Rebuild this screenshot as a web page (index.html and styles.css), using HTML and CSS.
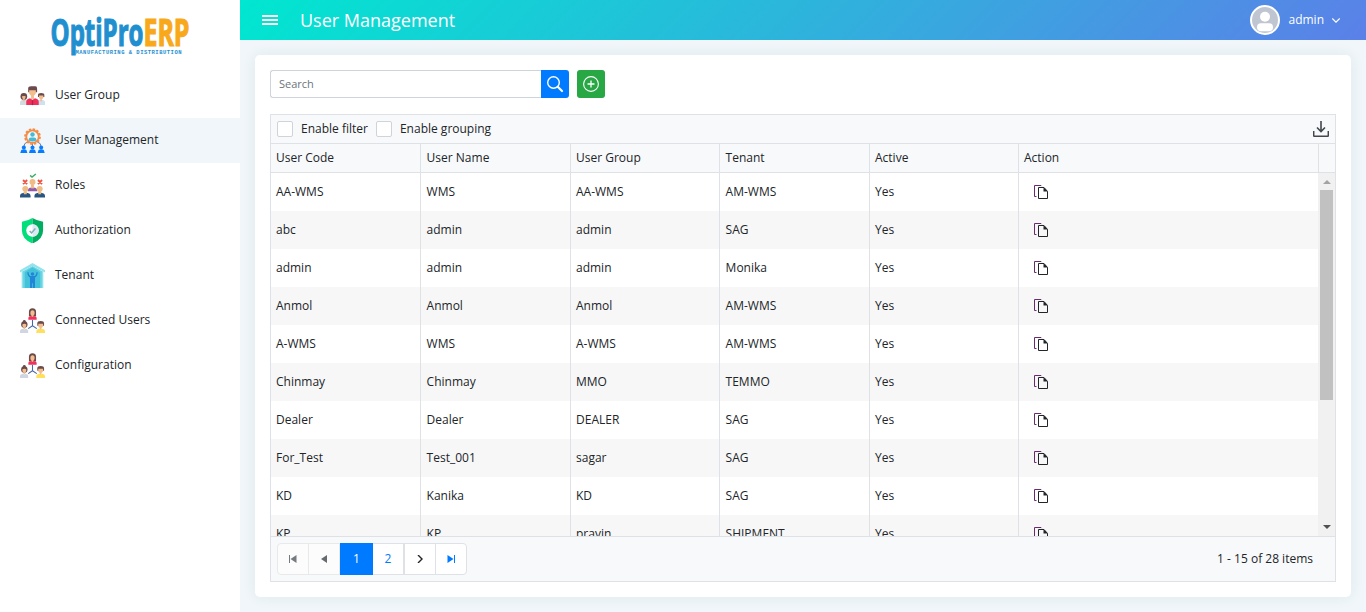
FILE: index.html
```html
<!DOCTYPE html>
<html lang="en">
<head>
<meta charset="utf-8">
<title>User Management</title>
<link rel="stylesheet" href="styles.css">
</head>
<body>
<svg class="defs" width="0" height="0" aria-hidden="true">
  <symbol id="copy" viewBox="0 0 16 16"><path d="M3.500 12.500h-2V1.500h6.500l.7.7" fill="none" stroke="#6b2a70"/><path d="M5.500 3.500h5.500l3.500 4v7H5.500z" fill="none" stroke="currentColor"/><path d="M10.500 3v4.500H15z" fill="currentColor"/></symbol>
  <symbol id="network" viewBox="0 0 26 26">
    <path d="M13 12.500v6M13 18.500l-4.500 3M13 18.500l4.500 3" stroke="#4468a8" stroke-width="1.100" fill="none"/>
    <path d="M9.300 8.500V4a3.700 3.700 0 0 1 7.400 0v4.500z" fill="#6b4a4b"/><ellipse cx="13" cy="5.200" rx="2.200" ry="2.800" fill="#f3bd8d"/><path d="M12 7h2v2.500h-2z" fill="#f3bd8d"/><path d="M8.700 12.200V10.200q0-1.700 3-1.900l1.300 1 1.300-1q3 .2 3 1.900v2z" fill="#f0325c"/>
    <circle cx="4.500" cy="14" r="1.500" fill="#6b4a4b"/><circle cx="4.500" cy="17.200" r="3.300" fill="#6b4a4b"/><path d="M2.500 17q2-1 4 0v2q-2 2.700-4 0zM3.700 19h1.600v3H3.700z" fill="#f3bd8d"/><path d="M0 26v-1.800Q0 22 3.500 21.700l1 1 1-1Q8.500 22 8.500 24.200V26z" fill="#cfd6e2"/>
    <path d="M18 18.500V16q0-2.500 3.500-2.500T25 16v2.500z" fill="#6b4a4b"/><path d="M19 16.300h5V19q-2.500 4-5 0zM20.700 20h1.600v3h-1.600z" fill="#f3bd8d"/><path d="M17 26v-1.800q0-2.200 3.500-2.500l1 1 1-1q3.500.3 3.500 2.500V26z" fill="#ffe05c"/>
  </symbol>
</svg>
<div class="app">
  <aside class="sidebar">
    <svg class="logo" width="240" height="73" viewBox="0 0 240 73">
      <text class="logo-word" fill="#1f8fd0" stroke="#1f8fd0" x="50.500" y="45.700" textLength="93" lengthAdjust="spacingAndGlyphs">OptiPro</text>
      <text class="logo-word" fill="#f8a91b" stroke="#f8a91b" x="143.500" y="45.700" textLength="46" lengthAdjust="spacingAndGlyphs">ERP</text>
      <text class="logo-tag" x="75.500" y="54" textLength="106">MANUFACTURING &amp; DISTRIBUTION</text>
    </svg>
    <nav class="menu">
      <a class="menu-item"><svg class="menu-icon" viewBox="0 0 26 26">
        <path d="M0 23v-3q0-2 4-2.500h2Q9 18 9 20v3z" fill="#d5d9e2"/><circle cx="4" cy="14" r="3.500" fill="#6a4a4c"/><path d="M2.300 13.500h3.400v2.200q-1.700 2.500-3.400 0zM3.200 16h1.600v3H3.200z" fill="#f0b78a"/>
        <path d="M17 23v-3q0-2 4-2.500h1q4 .5 4 2.500v3z" fill="#cfe0f1"/><path d="M18.700 14.500v-2q0-2 3.300-2t3.300 2v2z" fill="#6a4a4c"/><path d="M19.700 13h4.600v2.500q-2.300 3-4.600 0zM21 16h2v3h-2z" fill="#f3bd8d"/>
        <path d="M8.500 9.500V6q0-2.500 3-2.500H16q1.800 0 1.800 2.500v3.500z" fill="#6a4a4c"/><path d="M9.500 7.500h7V11q-3.500 5.500-7 0zM11.500 12h3v5h-3z" fill="#f3bd8d"/>
        <path d="M6.500 23v-3.500q0-3 4-3.700l2.500 2 2.500-2q4 .7 4 3.700V23z" fill="#ee2f5b"/><path d="M12.300 18h1.400v5h-1.400z" fill="#b71f44"/>
      </svg><span>User Group</span></a>
      <a class="menu-item active"><svg class="menu-icon" viewBox="0 0 26 26">
        <path d="M13 16v5M8 14.500q-4 1-4 5M18 14.500q4 1 4 5" stroke="#657b99" fill="none"/>
        <circle cx="13" cy="9" r="7.800" fill="none" stroke="#f58b45" stroke-width="1.800" stroke-dasharray="2.500 1.580"/><circle cx="13" cy="9" r="6.500" fill="#eefafc" stroke="#f58b45" stroke-width="1.900"/>
        <circle cx="13" cy="6.800" r="2.300" fill="#4db8d2"/><path d="M9 13v-1q0-2 2.500-2.200h3Q17 10 17 12v1q-4 2.300-8 0z" fill="#4db8d2"/>
        <g fill="#087cff"><circle cx="4" cy="20.300" r="2.100"/><path d="M.3 26l1-3q2.700-2 5.400 0l1 3z"/><circle cx="13" cy="20.300" r="2.100"/><path d="M9.300 26l1-3q2.700-2 5.400 0l1 3z"/><circle cx="22" cy="20.300" r="2.100"/><path d="M18.300 26l1-3q2.700-2 5.400 0l1 3z"/></g>
      </svg><span>User Management</span></a>
      <a class="menu-item"><svg class="menu-icon" viewBox="0 0 26 26">
        <path d="M10.500 2.500l2 1.700 4-3.200" stroke="#3caf68" stroke-width="1.500" fill="none"/><path d="M3.200 7.300l4.200 4.200m0-4.200l-4.200 4.200M18.700 7.300l4.200 4.200m0-4.200l-4.200 4.200" stroke="#ef533f" stroke-width="2"/>
        <path d="M8 19q0-4 4-4h2q4 0 4 4z" fill="#9159a8"/><circle cx="13" cy="9.300" r="3.100" fill="#f0bc85"/><path d="M11.500 12h3v4h-3z" fill="#f0bc85"/>
        <path d="M0 25.500v-1.500q0-3 4-3.500h3q4 .5 4 3.500v1.500zM15 25.500v-1.500q0-3 4-3.500h3q4 .5 4 3.500v1.500z" fill="#285680"/><circle cx="5.500" cy="16.500" r="3.100" fill="#f0bc85"/><circle cx="20.500" cy="16.500" r="3.100" fill="#f0bc85"/><path d="M4 19h3v3H4zM19 19h3v3h-3z" fill="#f0bc85"/>
      </svg><span>Roles</span></a>
      <a class="menu-item"><svg class="menu-icon" viewBox="0 0 26 26">
        <path d="M13 0Q8 3 2 4v9q0 9 11 13.500z" fill="#00df7c"/><path d="M13 0q5 3 11 4v9q0 9-11 13.500z" fill="#00ad61"/><circle cx="13" cy="13" r="6.500" fill="#fff"/><path d="M13 6.500a6.500 6.500 0 0 1 0 13z" fill="#dde9f2"/><path d="M10 13.500l2 2 4-4.500" stroke="#7fb0be" stroke-width="1.500" fill="none"/>
      </svg><span>Authorization</span></a>
      <a class="menu-item"><svg class="menu-icon" viewBox="0 0 26 26">
        <path d="M2 9l11-6 11 6v17H2z" fill="#6bd3e2"/><path d="M13 4.500l8 5V26H5V9.500z" fill="#43c3da"/><path d="M0 10V7.500L13 0l13 7.500V10L13 3z" fill="#91e3ed"/><path d="M2.500 9v17M23.500 9v17" stroke="#8ce3ec" stroke-width="1.300"/>
        <circle cx="13" cy="11.500" r="1.800" fill="#2384d8"/><path d="M8.300 9.500q0 4 3 5M17.700 9.500q0 4-3 5" stroke="#2384d8" stroke-width="1.400" fill="none"/><path d="M10.300 13.500h5.400L15.500 26h-2.100v-5h-.8v5h-2.100z" fill="#2384d8"/>
      </svg><span>Tenant</span></a>
      <a class="menu-item"><svg class="menu-icon"><use href="#network"/></svg><span>Connected Users</span></a>
      <a class="menu-item"><svg class="menu-icon"><use href="#network"/></svg><span>Configuration</span></a>
    </nav>
  </aside>
  <div class="main">
    <header class="topbar">
      <svg class="burger" width="16" height="10" viewBox="0 0 16 10"><path d="M0 1h16M0 5h16M0 9h16" stroke="#fff" stroke-width="2"/></svg>
      <h1 class="title">User Management</h1>
      <div class="account">
        <svg width="30" height="30" viewBox="0 0 30 30"><circle cx="15" cy="15" r="14" fill="#c0c6d1" stroke="#fff" stroke-width="2"/><circle cx="15" cy="11.700" r="5" fill="#fff"/><rect x="7" y="18.200" width="16" height="8" rx="4" fill="#fff"/></svg>
        <span class="account-name">admin</span>
        <svg width="8" height="5" viewBox="0 0 8 5"><path d="M.3.5L4 4.200 7.700.5" stroke="#fff" stroke-width="1.200" fill="none"/></svg>
      </div>
    </header>
    <section class="card">
      <div class="search-row">
        <input class="search" type="text" placeholder="Search">
        <button class="btn find"><svg width="18" height="18" viewBox="0 0 18 18" fill="none" stroke="#fff"><circle cx="7.500" cy="7.500" r="5.800" stroke-width="1.400"/><path d="M12 12l4 4" stroke-width="2.200" stroke-linecap="round"/></svg></button>
        <button class="btn add"><svg width="16" height="16" viewBox="0 0 16 16" fill="none" stroke="#fff"><circle cx="8" cy="8" r="7.400" stroke-width="1.100"/><path d="M8 4.500v7M4.500 8h7" stroke-width="1.300"/></svg></button>
      </div>
      <div class="grid">
        <div class="toolbar">
          <label class="check"><i class="box"></i>Enable filter</label>
          <label class="check"><i class="box"></i>Enable grouping</label>
          <svg class="export" width="16" height="16" viewBox="0 0 16 16" fill="none" stroke="#42474c"><path d="M8 0v10M4 6.500l4 4 4-4" stroke-width="1.600"/><path d="M.7 10v4.500q0 .8.800.8h13q.8 0 .8-.8V10" stroke-width="1.500"/></svg>
        </div>
        <div class="row head"><span>User Code</span><span>User Name</span><span>User Group</span><span>Tenant</span><span>Active</span><span>Action</span><span class="head-end"></span></div>
        <div class="body">
          <div class="rows">
            <div class="row"><span>AA-WMS</span><span>WMS</span><span>AA-WMS</span><span>AM-WMS</span><span>Yes</span><span class="action"><svg><use href="#copy"/></svg></span></div>
            <div class="row"><span>abc</span><span>admin</span><span>admin</span><span>SAG</span><span>Yes</span><span class="action"><svg><use href="#copy"/></svg></span></div>
            <div class="row"><span>admin</span><span>admin</span><span>admin</span><span>Monika</span><span>Yes</span><span class="action"><svg><use href="#copy"/></svg></span></div>
            <div class="row"><span>Anmol</span><span>Anmol</span><span>Anmol</span><span>AM-WMS</span><span>Yes</span><span class="action"><svg><use href="#copy"/></svg></span></div>
            <div class="row"><span>A-WMS</span><span>WMS</span><span>A-WMS</span><span>AM-WMS</span><span>Yes</span><span class="action"><svg><use href="#copy"/></svg></span></div>
            <div class="row"><span>Chinmay</span><span>Chinmay</span><span>MMO</span><span>TEMMO</span><span>Yes</span><span class="action"><svg><use href="#copy"/></svg></span></div>
            <div class="row"><span>Dealer</span><span>Dealer</span><span>DEALER</span><span>SAG</span><span>Yes</span><span class="action"><svg><use href="#copy"/></svg></span></div>
            <div class="row"><span>For_Test</span><span>Test_001</span><span>sagar</span><span>SAG</span><span>Yes</span><span class="action"><svg><use href="#copy"/></svg></span></div>
            <div class="row"><span>KD</span><span>Kanika</span><span>KD</span><span>SAG</span><span>Yes</span><span class="action"><svg><use href="#copy"/></svg></span></div>
            <div class="row"><span>KP</span><span>KP</span><span>pravin</span><span>SHIPMENT</span><span>Yes</span><span class="action"><svg><use href="#copy"/></svg></span></div>
          </div>
          <div class="scrollbar">
            <svg width="8" height="4" viewBox="0 0 8 4"><path d="M0 4l4-4 4 4z" fill="#a3a3a3"/></svg>
            <div class="thumb"></div>
            <svg class="down" width="8" height="4" viewBox="0 0 8 4"><path d="M0 0l4 4 4-4z" fill="#505050"/></svg>
          </div>
        </div>
        <div class="pager">
          <div class="pages">
            <span class="page off"><svg width="8" height="8" viewBox="0 0 8 8"><path d="M.5 0v8" stroke="#757a7f"/><path d="M7.500 0v8L1.500 4z" fill="#757a7f"/></svg></span>
            <span class="page off"><svg width="8" height="8" viewBox="0 0 8 8"><path d="M7 0v8L1 4z" fill="#656a6f"/></svg></span>
            <span class="page current">1</span>
            <span class="page">2</span>
            <span class="page next"><svg width="8" height="8" viewBox="0 0 8 8"><path d="M2 0l4 4-4 4" stroke="#212529" stroke-width="1.400" fill="none"/></svg></span>
            <span class="page"><svg width="8" height="8" viewBox="0 0 8 8"><path d="M7.500 0v8" stroke="#007bff"/><path d="M.5 0v8l6-4z" fill="#007bff"/></svg></span>
          </div>
          <span class="info">1 - 15 of 28 items</span>
        </div>
      </div>
    </section>
  </div>
</div>
</body>
</html>
```
FILE: styles.css
```css
* { box-sizing: border-box; }
body { margin: 0; font: 12px/18px "Open Sans", sans-serif; color: #212529; background: #f0f6f9; overflow: hidden; }
svg { display: block; flex: none; }
.defs { position: absolute; }
.app { display: flex; width: 1366px; height: 612px; }
.sidebar { width: 240px; background: #fff; flex: none; }
.logo-word { font: 700 37px "Open Sans", sans-serif; stroke-width: 1.2px; }
.logo-tag { font: 700 5.500px "Liberation Mono", monospace; fill: #1f8fd0; }
.menu-item { display: flex; align-items: center; gap: 10px; height: 45px; padding-left: 20px; }
.menu-item.active { background: #f0f6f9; }
.menu-icon { width: 25px; height: 25px; }
.menu-item span { padding-bottom: 1px; }
.main { flex: 1; min-width: 0; }
.topbar { display: flex; align-items: center; height: 40px; padding: 0 26px 0 22px; color: #fff; background: linear-gradient(135deg, #00e7d0 0%, #5b80e8 100%); }
.title { margin: 0 0 1px 22px; font-size: 18px; line-height: 24px; font-weight: 400; }
.account { display: flex; align-items: center; margin-left: auto; gap: 8px; }
.card { margin: 15px; padding: 15px; height: 542px; background: #fff; border-radius: 5px; box-shadow: 0 0 14px rgba(0, 90, 90, .08); }
.search-row { display: flex; height: 28px; margin-bottom: 16px; }
.search { width: 271px; border: 1px solid #ced4da; border-right: 0; border-radius: 3px 0 0 3px; padding: 0 8px 2px; font: 11px "Open Sans", sans-serif; outline: 0; }
.search::placeholder { color: #6c757d; }
.btn { display: flex; align-items: center; justify-content: center; width: 28px; border: 0; padding: 0; }
.find { background: #007bff; border-radius: 0 3px 3px 0; }
.add { background: #28a745; border-radius: 3px; margin-left: 8px; }
.grid { height: 468px; border: 1px solid #dee2e6; }
.toolbar { display: flex; align-items: center; height: 29px; padding: 0 6px; background: #f8f9fb; border-bottom: 1px solid #dee2e6; }
.check { display: flex; align-items: center; margin-right: 8px; }
.box { width: 16px; height: 16px; margin-right: 8px; background: #fff; border: 1px solid #ced4da; border-radius: 2px; }
.export { margin-left: auto; }
.row { display: grid; grid-template-columns: 149px 150px 149px 150px 149px 300px; height: 38px; }
.row > span { display: flex; align-items: center; padding-left: 5px; border-left: 1px solid #dee2e6; }
.row > span:first-child { border-left: 0; }
.row > span:nth-child(2), .row > span:nth-child(4) { padding-left: 5.600px; }
.row:nth-child(even) { background: #f7f7f7; }
.head { grid-template-columns: 149px 150px 149px 150px 149px 300px 17px; height: 29px; border-bottom: 1px solid #dee2e6; }
.row.head { background: #f8f9fb; }
.body { display: flex; height: 363px; overflow: hidden; }
.rows { width: 1047px; }
.row > .action { padding-left: 14px; }
.action svg { width: 16px; height: 16px; }
.scrollbar { display: flex; flex-direction: column; align-items: center; width: 17px; background: #f1f1f1; padding: 7px 0 7px; }
.thumb { width: 13px; height: 210px; margin-top: 6px; background: #c1c1c1; }
.down { margin-top: auto; }
.pager { display: flex; align-items: center; justify-content: space-between; height: 45px; padding: 0 22px 0 6px; background: #f8f9fb; border-top: 1px solid #dee2e6; }
.pages { display: flex; height: 32px; border-radius: 4px; }
.page { display: flex; align-items: center; justify-content: center; width: 32px; margin-right: -1px; background: #fff; border: 1px solid #dee2e6; color: #007bff; }
.page:first-child { border-radius: 4px 0 0 4px; }
.page:last-child { border-radius: 0 4px 4px 0; margin-right: 0; }
.off { background: #fcfcfc; border-color: #e7e9eb; }
.current { width: 33px; margin-left: 1px; background: #007bff; border-color: #007bff; color: #fff; z-index: 1; }
.next { margin-left: 1px; }
```
